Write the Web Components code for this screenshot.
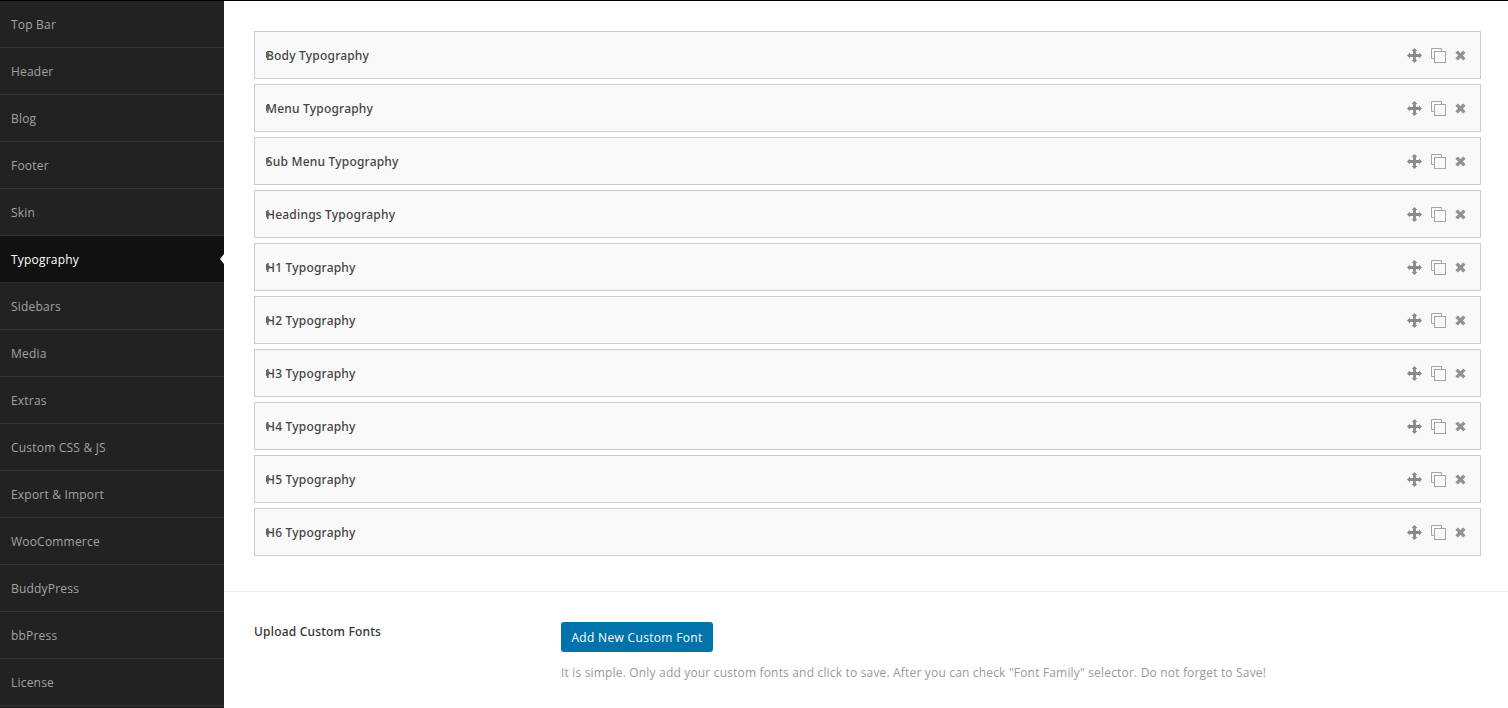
<!DOCTYPE html>
<html><head><meta charset="utf-8"><style>
html,body{margin:0;padding:0;background:#fff;height:708px;overflow:hidden}
body{font-family:"Open Sans","Noto Sans",sans-serif}
</style></head><body>
<template id="t-app"><style>
:host{display:flex;width:1508px;height:708px;overflow:hidden;box-sizing:border-box;border-top:1px solid #000}
main{flex:1;display:flex;flex-direction:column;min-width:0}
.rows{display:flex;flex-direction:column;gap:5px;padding:30px 27px 35px 30px;border-bottom:1px solid #eee}
.upload{display:flex;padding:31px 30px 0}
.label{width:307px;font:500 12px/18px "Noto Sans","Open Sans",sans-serif;color:#333;letter-spacing:.2px}
</style>
<slot name="side"></slot>
<main><div class="rows"><slot name="row"></slot></div>
<div class="upload"><div class="label">Upload Custom Fonts</div><slot name="field"></slot></div></main>
</template>
<template id="t-side"><style>
:host{display:flex;flex-direction:column;width:224px;flex:none;background:#222}
</style><slot></slot></template>
<template id="t-item"><style>
:host{display:flex;align-items:center;position:relative;box-sizing:border-box;height:47px;padding:1px 11px 0;font-size:12px;letter-spacing:.2px;color:#a3a3a3;border-bottom:1px solid #333;background:#222}
:host([active]){background:#111;color:#fff;border-bottom-color:#2c2c2c}
:host([active])::after{content:"";position:absolute;right:0;top:18px;border:5px solid transparent;border-right:4px solid #fff;border-left-width:0}
</style><slot></slot></template>
<template id="t-row"><style>
:host{display:flex;align-items:center;justify-content:space-between;box-sizing:border-box;height:48px;padding:0 14px 0 11px;background:#f9f9f9;border:1px solid #ccc;font:500 12px "Noto Sans","Open Sans",sans-serif;color:#444;position:relative}
.title{position:relative;letter-spacing:.2px}
.title::before{content:"";position:absolute;left:0;top:5px;width:5px;height:7px;background:#666;clip-path:polygon(0 0,100% 50%,0 100%)}
.tools{display:flex;align-items:center;gap:9px}
svg{display:block}
</style><span class="title"><slot></slot></span>
<span class="tools">
<svg width="15" height="15" viewBox="0 0 15 15" fill="#8a8a8a"><path d="M7.5 0 10.4 2.9H8.9V6.1H12.1V4.6L15 7.5 12.1 10.4V8.9H8.9V12.1H10.4L7.5 15 4.6 12.1H6.1V8.9H2.9V10.4L0 7.5 2.9 4.6V6.1H6.1V2.9H4.6Z"/></svg>
<svg width="15" height="15" viewBox="0 0 15 15" fill="none" stroke="#a5a5a5"><path d="M3.5 10.5H.5V.5H10.5V3.5"/><rect x="3.5" y="3.5" width="11" height="11"/></svg>
<svg width="11" height="11" viewBox="0 0 11 11" fill="none" stroke="#929292" stroke-width="3.4"><path d="M1.6 1.6 9.4 9.4M9.4 1.6 1.6 9.4"/></svg>
</span></template>
<template id="t-field"><style>
:host{display:block;margin-top:-1px}
button{display:block;box-sizing:border-box;height:30px;width:152px;margin:0;padding:0;border:0;border-radius:3px;background:#0073aa;color:#fff;font:400 12px "Open Sans","Noto Sans",sans-serif;letter-spacing:.32px}
p{margin:12px 0 0;font-size:12px;line-height:18px;color:#999;letter-spacing:.176px}
</style><button><slot name="btn"></slot></button><p><slot name="help"></slot></p></template>
<x-app>
<x-side slot="side">
<x-item>Top Bar</x-item><x-item>Header</x-item><x-item>Blog</x-item><x-item>Footer</x-item><x-item>Skin</x-item><x-item active>Typography</x-item><x-item>Sidebars</x-item><x-item>Media</x-item><x-item>Extras</x-item><x-item>Custom CSS &amp; JS</x-item><x-item>Export &amp; Import</x-item><x-item>WooCommerce</x-item><x-item>BuddyPress</x-item><x-item>bbPress</x-item><x-item>License</x-item>
</x-side>
<x-row slot="row">Body Typography</x-row><x-row slot="row">Menu Typography</x-row><x-row slot="row">Sub Menu Typography</x-row><x-row slot="row">Headings Typography</x-row><x-row slot="row">H1 Typography</x-row><x-row slot="row">H2 Typography</x-row><x-row slot="row">H3 Typography</x-row><x-row slot="row">H4 Typography</x-row><x-row slot="row">H5 Typography</x-row><x-row slot="row">H6 Typography</x-row>
<x-field slot="field"><span slot="btn">Add New Custom Font</span><span slot="help">It is simple. Only add your custom fonts and click to save. After you can check "Font Family" selector. Do not forget to Save!</span></x-field>
</x-app>
<script>
for(const [n,t] of [['x-app','t-app'],['x-side','t-side'],['x-item','t-item'],['x-row','t-row'],['x-field','t-field']]){
customElements.define(n,class extends HTMLElement{constructor(){super();this.attachShadow({mode:'open'}).appendChild(document.getElementById(t).content.cloneNode(true));}});
}
</script>
</body></html>
